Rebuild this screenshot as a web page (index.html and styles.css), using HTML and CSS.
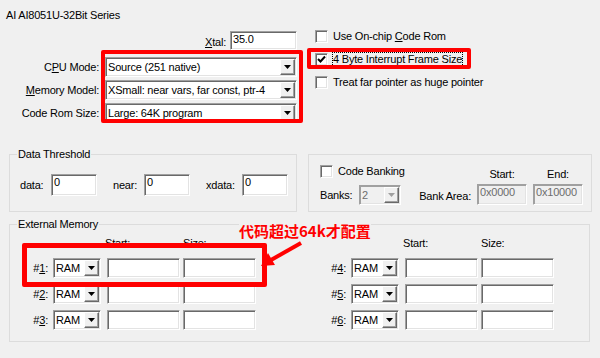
FILE: index.html
```html
<!DOCTYPE html>
<html lang="en">
<head>
    <meta charset="UTF-8">
    <title>Options for Target - Target</title>
    <link rel="stylesheet" href="styles.css">
</head>
<body>
<div class="dialog">
    <div class="device">AI AI8051U-32Bit Series</div>

    <div class="top">
        <div class="left-col">
            <div class="xtal-row">
                <label><u>X</u>tal:</label>
                <div class="field xtal">35.0</div>
            </div>
            <div class="combo-grid">
                <label>C<u>P</u>U Mode:</label>
                <div class="combo"><span class="value">Source (251 native)</span><span class="drop"></span></div>
                <label><u>M</u>emory Model:</label>
                <div class="combo"><span class="value">XSmall: near vars, far const, ptr-4</span><span class="drop"></span></div>
                <label>Code Rom Size:</label>
                <div class="combo"><span class="value">Large: 64K program</span><span class="drop"></span></div>
            </div>
        </div>
        <div class="right-col">
            <div class="check"><span class="box"></span><span>Use On-chip <u>C</u>ode Rom</span></div>
            <div class="check"><span class="box checked"><svg width="9" height="9" viewBox="0 0 9 9"><polyline points="1,4 3.5,6.5 8,1.5" fill="none" stroke="#000" stroke-width="2"/></svg></span><span class="focus">4 Byte Interrupt Frame Size</span></div>
            <div class="check"><span class="box"></span><span>Treat far pointer as huge pointer</span></div>
        </div>
    </div>

    <div class="groups">
        <div class="group threshold">
            <span class="legend">Data Threshold</span>
            <div class="thr-row">
                <label class="lbl-data">data:</label>
                <div class="field thr-field">0</div>
                <label class="lbl-near">near:</label>
                <div class="field thr-field">0</div>
                <label class="lbl-xdata">xdata:</label>
                <div class="field thr-field last">0</div>
            </div>
        </div>
        <div class="group banking">
            <div class="bank-grid">
                <div class="check bank-check"><span class="box"></span><span>Code Banking</span></div>
                <span class="head start-head">Start:</span>
                <span class="head end-head">End:</span>
                <label class="banks-lbl">Banks:</label>
                <div class="combo off small"><span class="value">2</span><span class="drop"></span></div>
                <label class="area-lbl">Bank Area:</label>
                <div class="field off area">0x0000</div>
                <div class="field off area end">0x10000</div>
            </div>
        </div>
    </div>

    <div class="group ext">
        <span class="legend">External Memory</span>
        <div class="ext-body">
            <div class="mem">
                <span></span><span></span><span class="head start">Start:</span><span class="head">Size:</span>
                <label>#<u>1</u>:</label>
                <div class="combo ram"><span class="value">RAM</span><span class="drop"></span></div>
                <div class="field mem-field"></div><div class="field mem-field"></div>
                <label>#<u>2</u>:</label>
                <div class="combo ram"><span class="value">RAM</span><span class="drop"></span></div>
                <div class="field mem-field"></div><div class="field mem-field"></div>
                <label>#<u>3</u>:</label>
                <div class="combo ram"><span class="value">RAM</span><span class="drop"></span></div>
                <div class="field mem-field"></div><div class="field mem-field"></div>
            </div>
            <div class="mem">
                <span></span><span></span><span class="head start">Start:</span><span class="head">Size:</span>
                <label>#<u>4</u>:</label>
                <div class="combo ram"><span class="value">RAM</span><span class="drop"></span></div>
                <div class="field mem-field"></div><div class="field mem-field"></div>
                <label>#<u>5</u>:</label>
                <div class="combo ram"><span class="value">RAM</span><span class="drop"></span></div>
                <div class="field mem-field"></div><div class="field mem-field"></div>
                <label>#<u>6</u>:</label>
                <div class="combo ram"><span class="value">RAM</span><span class="drop"></span></div>
                <div class="field mem-field"></div><div class="field mem-field"></div>
            </div>
        </div>
    </div>

    <!-- annotations drawn over the dialog -->
    <div class="mark mark-cpu"></div>
    <div class="mark mark-frame"></div>
    <div class="mark mark-ext"></div>
    <div class="note">代码超过64k才配置</div>
    <svg class="arrow" width="50" height="32" viewBox="0 0 50 32">
        <line x1="46" y1="5" x2="16" y2="22" stroke="#f00" stroke-width="4"/>
        <polygon points="6,28 20,27 13,15" fill="#f00"/>
    </svg>
</div>
</body>
</html>
```

FILE: styles.css
```css
body {
    margin: 0;
    background: #f0f0f0;
    font-family: "Liberation Sans", Arial, sans-serif;
    font-size: 11px;
    line-height: 13px;
    letter-spacing: -0.2px;
    color: #000;
}
.dialog {
    position: relative;
    width: 600px;
    height: 358px;
    overflow: hidden;
}
.device {
    padding: 9px 0 0 6px;
}
u {
    text-decoration-thickness: 1px;
    text-underline-offset: 1px;
}

/* sunken edit box */
.field {
    box-sizing: border-box;
    background: #fff;
    border: 1px solid;
    border-color: #a0a0a0 #fff #fff #a0a0a0;
    box-shadow: inset 1px 1px #696969, inset -1px -1px #e3e3e3;
    padding: 1px 2px;
    white-space: nowrap;
}
.field.off {
    background: #f0f0f0;
    color: #6d6d6d;
    box-shadow: inset 1px 1px #a0a0a0, inset -1px -1px #e3e3e3;
}

/* drop-down list */
.combo {
    box-sizing: border-box;
    height: 20px;
    display: flex;
    align-items: center;
    background: #fff;
    border: 1px solid;
    border-color: #a0a0a0 #fff #fff #a0a0a0;
    box-shadow: inset 1px 1px #696969, inset -1px -1px #e3e3e3;
    padding: 1px 1px 1px 2px;
}
.combo .value {
    flex: 1;
    white-space: nowrap;
    overflow: hidden;
}
.drop {
    box-sizing: border-box;
    width: 15px;
    height: 16px;
    background: #f0f0f0;
    border: 1px solid;
    border-color: #fff #696969 #696969 #fff;
    box-shadow: inset -1px -1px #a0a0a0;
    display: flex;
    align-items: center;
    justify-content: center;
}
.drop::after {
    content: "";
    width: 7px;
    height: 4px;
    background: #000;
    clip-path: polygon(0 0, 100% 0, 50% 100%);
}
.combo.off {
    background: #f0f0f0;
    color: #6d6d6d;
    box-shadow: inset 1px 1px #a0a0a0, inset -1px -1px #e3e3e3;
}
.combo.off .drop::after {
    background: #a0a0a0;
}

/* top part */
.top {
    display: flex;
    margin-top: 8px;
}
.left-col {
    width: 297px;
    padding-top: 1px;
}
.xtal-row {
    display: flex;
    justify-content: flex-end;
    align-items: center;
    gap: 4px;
}
.xtal-row label {
    padding-top: 3px;
}
.xtal {
    width: 67px;
    height: 19px;
}
.combo-grid {
    display: grid;
    grid-template-columns: 99px 192px;
    column-gap: 6px;
    row-gap: 3px;
    margin-top: 7px;
}
.combo-grid label {
    text-align: right;
    align-self: center;
}
.right-col {
    margin-left: 18px;
    display: flex;
    flex-direction: column;
    gap: 10px;
}
.check {
    display: flex;
    align-items: center;
    gap: 5px;
    height: 13px;
    white-space: nowrap;
}
.box {
    box-sizing: border-box;
    width: 13px;
    height: 13px;
    background: #fff;
    border: 1px solid;
    border-color: #a0a0a0 #fff #fff #a0a0a0;
    box-shadow: inset 1px 1px #696969, inset -1px -1px #e3e3e3;
    display: flex;
    align-items: center;
    justify-content: center;
}
.box svg {
    display: block;
}
.focus {
    outline: 1px dotted #000;
}

/* group boxes */
.groups {
    display: flex;
    gap: 11px;
    margin: 31px 0 0 9px;
}
.group {
    box-sizing: border-box;
    border: 1px solid #dcdcdc;
}
.legend {
    display: block;
    width: fit-content;
    margin: -7px 0 0 7px;
    padding: 0 1px;
    background: #f0f0f0;
}
.threshold {
    width: 288px;
    height: 58px;
}
.thr-row {
    display: flex;
    align-items: center;
    height: 22px;
    margin: 13px 0 0 10px;
}
.lbl-data, .lbl-near {
    width: 31px;
}
.lbl-xdata {
    width: 36px;
}
.thr-field {
    width: 46px;
    height: 22px;
    margin-right: 16px;
}
.thr-field.last {
    margin-right: 0;
}

.banking {
    width: 284px;
    height: 58px;
}
.bank-grid {
    display: grid;
    grid-template-columns: 39px 42px 76px 50px 56px;
    grid-template-rows: 13px 21px;
    row-gap: 6px;
    padding: 10px 0 0 11px;
}
.bank-check {
    grid-column: 1 / 4;
}
.head {
    white-space: nowrap;
}
.start-head {
    text-align: center;
    padding-top: 3px;
}
.end-head {
    text-align: center;
    padding: 3px 0 0 6px;
}
.banks-lbl {
    align-self: center;
    padding-top: 2px;
}
.combo.small {
    width: 42px;
    align-self: end;
}
.area-lbl {
    text-align: right;
    padding: 6px 6px 0 0;
}
.area {
    width: 50px;
    height: 21px;
}
.area.end {
    margin-left: 6px;
}

.ext {
    width: 581px;
    height: 118px;
    margin: 12px 0 0 9px;
}
.ext-body {
    display: flex;
    gap: 63px;
    margin-top: 6px;
    padding-left: 11px;
}
.mem {
    display: grid;
    grid-template-columns: 32px 54px 76px 73px;
    grid-template-rows: 15px 20px 20px 20px;
    row-gap: 6px;
}
.mem .head.start {
    margin-left: -2px;
}
.mem label {
    text-align: right;
    padding: 4px 5px 0 0;
}
.combo.ram {
    width: 48px;
}
.mem-field {
    width: 73px;
    height: 20px;
}

/* red markings */
.mark {
    position: absolute;
    box-sizing: border-box;
    border: 4px solid #f00;
    border-radius: 2px;
}
.mark-cpu {
    left: 101px;
    top: 50px;
    width: 202px;
    height: 73px;
}
.mark-frame {
    left: 307px;
    top: 48px;
    width: 164px;
    height: 21px;
}
.mark-ext {
    left: 22px;
    top: 243px;
    width: 245px;
    height: 44px;
    border-width: 5px;
}
.note {
    position: absolute;
    left: 239px;
    top: 222px;
    font-family: "Noto Sans CJK SC", sans-serif;
    font-weight: bold;
    font-size: 15px;
    line-height: 17px;
    letter-spacing: 0;
    color: #f00;
    background: #f0f0f0;
}
.arrow {
    position: absolute;
    left: 255px;
    top: 238px;
}
```
